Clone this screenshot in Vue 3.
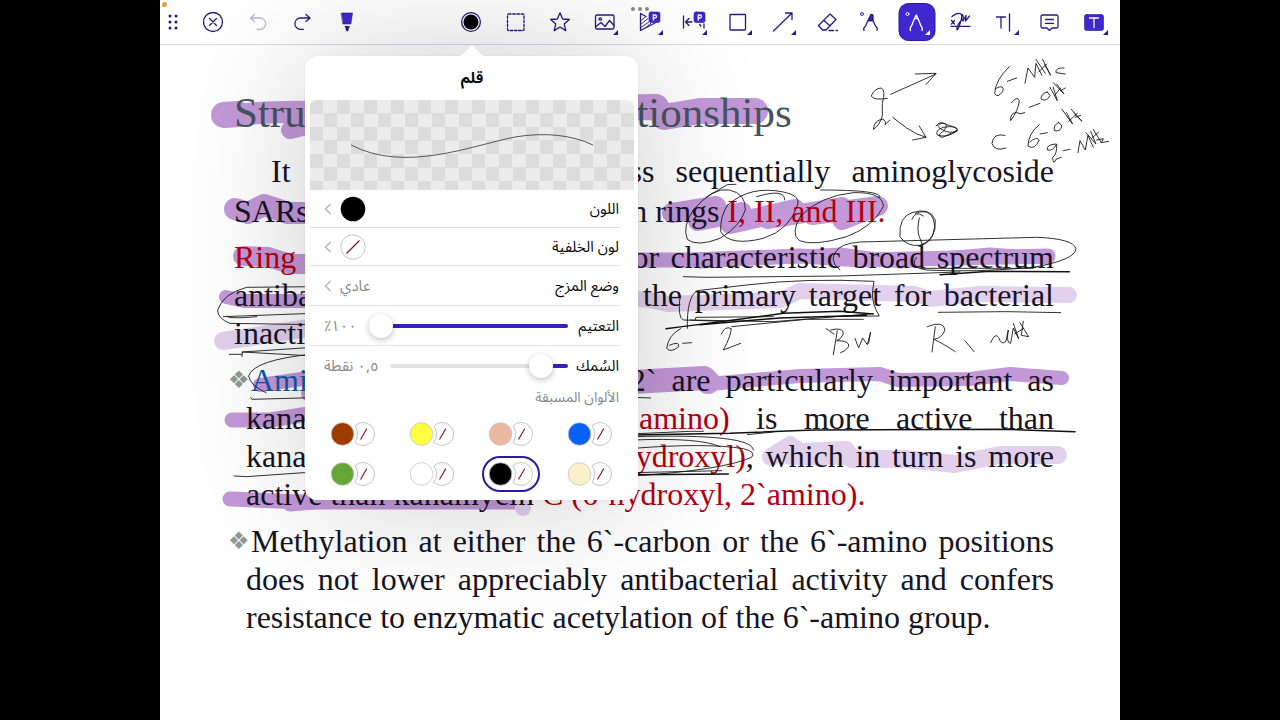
<script setup>
import { ref } from 'vue'

const opacity = ref(100)
const thickness = ref(10)

const swatches = [
  { name: 'بني', color: '#a03a03' },
  { name: 'أصفر', color: '#feff41' },
  { name: 'خوخي', color: '#e9b9a0' },
  { name: 'أزرق', color: '#0a60ff' },
  { name: 'أخضر', color: '#66a636' },
  { name: 'أبيض', color: '#ffffff' },
  { name: 'أسود', color: '#000000', selected: true },
  { name: 'كريمي', color: '#faf1cb' },
]

const tools = [
  { id: 'color', label: 'Colour' },
  { id: 'select', label: 'Select' },
  { id: 'star', label: 'Favourites' },
  { id: 'image', label: 'Image', more: true },
  { id: 'area', label: 'Area measurement', more: true },
  { id: 'distance', label: 'Distance measurement', more: true },
  { id: 'square', label: 'Rectangle', more: true },
  { id: 'arrow', label: 'Arrow', more: true },
  { id: 'eraser', label: 'Eraser' },
  { id: 'marker', label: 'Highlighter' },
  { id: 'pen', label: 'Pen', more: true, active: true },
  { id: 'sign', label: 'Signature' },
  { id: 'text', label: 'Text', more: true },
  { id: 'note', label: 'Note' },
  { id: 'markup', label: 'Text markup', more: true },
]

const strong = '#c398d8'
const light = '#e2d0ec'
const highlights = [
  { c: strong, w: 26, d: 'M224 115 L238 114' },
  { c: strong, w: 22, d: 'M238 115 Q270 111 315 112' },
  { c: strong, w: 18, d: 'M290 130 L315 124' },
  { c: strong, w: 26, d: 'M600 108 L656 107' },
  { c: strong, w: 26, d: 'M664 117 L700 111 L755 111' },
  { c: strong, w: 22, d: 'M235 209 L248 213 L264 205 L288 213 L315 213' },
  { c: strong, w: 20, d: 'M672 213 L716 206 L698 221 L742 212 L730 224 L795 209 L768 219 L842 207 L812 215 L878 206 L842 220' },
  { c: strong, w: 20, d: 'M243 256 L268 257 L290 264 L310 264' },
  { c: strong, w: 15, d: 'M600 260 L690 260 L800 256 L860 260 L1048 256' },
  { c: strong, w: 13, d: 'M700 262 L840 254 L900 262 L990 254 L1048 258' },
  { c: strong, w: 14, d: 'M226 297 L244 301 L315 301' },
  { c: light, w: 16, d: 'M600 296 L650 300 L668 304 L780 300 L800 291 L915 294 L930 299 L980 294 L1069 295' },
  { c: light, w: 18, d: 'M223 341 L250 337 L315 327' },
  { c: strong, w: 14, d: 'M260 385 L315 377' },
  { c: strong, w: 14, d: 'M308 394 L318 394' },
  { c: strong, w: 24, d: 'M600 384 L650 381 L704 378 L708 382' },
  { c: strong, w: 14, d: 'M708 384 L800 376 L880 374 L898 380 L970 379 L1010 374 L1062 378' },
  { c: strong, w: 15, d: 'M232 420 L270 420 L315 413' },
  { c: light, w: 18, d: 'M771 457 L790 445 L800 452 L846 450 L852 459 L905 459 L955 464 L1000 455 L1058 455' },
  { c: light, w: 16, d: 'M790 457 L850 457' },
  { c: strong, w: 15, d: 'M230 499 L300 502 L520 502' },
  { c: strong, w: 15, d: 'M290 504 L360 498' },
  { c: light, w: 16, d: 'M523 496 L523 508' },
]

// Handwriting, grouped by the area of the page it was written on.
const notes = [
  {
    at: 'translate(640 60) scale(0.3333)',
    thin: [
      'M752 103 L888 42 M826 42 L888 40 L858 74',
      'M742 115 Q700 122 694 108 Q703 85 724 84 Q738 92 727 130 L727 168 Q718 198 700 208 Q703 180 728 178 Q740 182 735 194 L750 180',
      'M758 172 L800 204 Q830 225 858 232 M838 198 L858 232 L818 240',
      'M888 198 Q900 180 920 194 Q960 205 950 214 Q920 235 892 225 Q885 210 910 202 Q955 195 952 212 Q930 225 900 205 Q885 195 905 190 Q930 188 912 212 Q885 230 908 232 L950 212',
      'M1108 20 Q1066 60 1064 100 Q1072 116 1088 95 Q1096 70 1066 86 M1102 64 L1130 54',
      'M1155 70 L1164 24 L1184 52 L1188 10 L1206 46 M1188 -2 L1216 40 M1196 36 L1220 12 M1208 -2 L1232 46 L1214 14 M1272 24 Q1246 22 1248 38 L1276 42',
      'M1115 128 Q1132 106 1138 122 Q1136 150 1112 182 Q1110 158 1130 158 Q1142 165 1154 158 M1168 142 L1200 130',
      'M1222 96 Q1200 102 1204 118 Q1222 126 1230 106 L1222 96 M1230 82 L1252 122 L1240 82 M1244 106 L1262 84 M1240 68 L1272 102 L1250 72 M1262 92 L1276 84',
      'M1095 226 Q1060 218 1056 250 Q1064 276 1098 264',
      'M1198 194 Q1165 220 1164 258 Q1184 272 1198 240 Q1190 228 1170 246 M1200 222 L1222 218',
      'M1256 188 Q1238 196 1244 212 Q1262 216 1266 198 L1256 186 M1266 148 L1298 192 L1280 158 M1286 184 L1312 160 M1294 148 L1326 184 L1302 160 M1306 172 L1322 166',
      'M1248 252 Q1218 254 1222 270 Q1240 274 1250 252 Q1252 282 1238 292 Q1240 318 1248 298 L1264 292 M1270 272 L1290 268',
      'M1314 278 L1320 242 L1336 270 L1344 226 L1360 262 M1338 218 L1368 252 L1352 214 M1356 234 L1376 216 M1360 208 L1384 248 M1370 240 L1390 236 L1384 248 L1406 244',
      'M198 412 L262 374 L288 373',
      'M160 450 Q220 380 268 390 Q318 400 316 450 Q300 500 240 535 Q170 562 142 538 Q126 500 160 450',
      'M262 436 Q330 375 430 396 Q480 406 474 432 Q450 510 370 535 Q270 560 242 515 Q240 470 262 436',
      'M350 410 Q436 384 434 420',
      'M482 468 Q540 408 640 398 Q730 396 730 440 Q700 500 620 530 Q520 560 478 542 Q450 520 482 468 M542 390 Q730 390 720 412',
      'M816 458 Q776 470 780 530 Q800 560 840 556 Q890 540 886 480 Q870 440 816 458 M826 460 Q880 440 884 500 Q880 550 838 558',
      'M838 474 Q830 510 838 530 L848 556 M816 478 Q826 450 850 468',
    ],
    thick: [],
  },
  {
    at: 'translate(640 180) scale(0.3333)',
    thin: [
      'M600 270 Q560 238 596 205 Q620 184 700 185 L1190 172 Q1300 176 1308 206 Q1306 240 1180 262 Q1000 278 860 270 Q806 262 830 232',
      'M130 290 L200 292 L600 288 L960 276 M840 265 L1180 265',
      'M120 350 Q112 412 130 420 L250 424 M142 445 Q140 350 172 332 L330 314 Q500 294 702 304 L698 332 Q694 370 718 408 L560 410',
      'M165 420 L168 412 L400 410 M275 440 L500 418 L670 418 M150 420 L400 425 L690 402',
      'M122 446 Q85 465 80 505 Q92 520 116 500 Q120 482 88 496 M128 490 L155 488',
      'M244 462 Q255 436 274 446 Q272 470 250 510 L302 490',
      'M558 446 L582 462 M592 452 L580 524 M572 450 Q612 440 610 462 Q602 480 590 482 Q630 482 626 500 Q618 514 602 518',
      'M645 475 L656 504 L668 474 L682 494 L692 456 L686 490',
      'M886 440 L876 516 M862 440 Q912 420 915 450 Q906 475 882 478 Q908 490 946 515 M975 482 L1002 515',
      'M1052 488 Q1066 456 1076 472 Q1084 498 1098 484 L1105 450 Q1098 490 1112 490 L1120 444 L1136 476 L1120 430 M1124 462 L1150 446 M1140 428 L1166 470 L1144 466 L1150 424',
      'M895 397 L1100 395 L1262 398',
    ],
    thick: [
      'M900 284 L1050 274 L1288 275',
      'M78 446 Q300 418 430 400 L600 394 L700 402',
      'M180 434 L420 414 L680 406',
    ],
  },
  {
    at: 'translate(640 340) scale(0.3333)',
    thin: [
      'M-50 283 L150 274 L190 274 M322 284 L400 276',
      'M-20 325 Q200 308 310 326 Q350 336 335 352 Q250 390 -20 408',
      'M-20 300 Q180 292 240 320 M-20 290 Q340 280 340 330 M-20 172 L32 174 M-20 398 L245 392',
    ],
    thick: ['M-20 285 L270 280 L520 270 L1100 268 L1305 275', 'M-20 404 L265 402'],
  },
  {
    at: 'translate(160 350) scale(0.3333)',
    thin: [
      'M208 13 L245 13 M246 20 L247 6 L460 -8 M247 6 L460 18',
      'M460 12 Q280 30 266 78 Q270 106 318 128',
      'M272 142 L276 148 L460 143 M222 378 L260 380 L460 366',
      'M460 -190 L260 -188 Q190 -170 173 -120 Q172 -95 210 -80 L460 -76 M190 -100 L460 -110 M200 -102 Q200 -92 290 -100',
    ],
    thick: [],
  },
]
</script>

<template>
  <main class="stage">
    <header class="toolbar">
      <span class="rec-dot"></span>
      <span class="dots"><i></i><i></i><i></i></span>
      <div class="left-tools">
        <button class="grip" aria-label="Move toolbar">
          <svg width="10" height="16" viewBox="0 0 10 16" fill="#25157c">
            <circle cx="2" cy="2" r="1.5" /><circle cx="8" cy="2" r="1.5" />
            <circle cx="2" cy="8" r="1.5" /><circle cx="8" cy="8" r="1.5" />
            <circle cx="2" cy="14" r="1.5" /><circle cx="8" cy="14" r="1.5" />
          </svg>
        </button>
        <button class="tool" aria-label="Close">
          <svg class="icon" viewBox="0 0 24 24"><circle cx="12" cy="12" r="9.5" /><path d="M8.5 8.5 L15.5 15.5 M15.5 8.5 L8.5 15.5" /></svg>
        </button>
        <button class="tool faded" aria-label="Undo">
          <svg class="icon" viewBox="0 0 24 24"><path d="M8.5 4.5 L4.5 8 L8.5 11.5 M4.5 8 H14 a5.6 5.6 0 0 1 0 11.3 h-3" /></svg>
        </button>
        <button class="tool" aria-label="Redo">
          <svg class="icon" viewBox="0 0 24 24"><path d="M15 4.5 L19 8 L15 11.5 M19 8 H9.5 a5.6 5.6 0 0 0 0 11.3 h3" /></svg>
        </button>
        <button class="tool" aria-label="Pen style">
          <svg class="icon" viewBox="0 0 24 24"><path d="M5.5 3 h11 l-1.6 11 h-7.8 z" class="solid" /><path d="M8.6 16 h5.2 l-1.8 5.2 h-1.6 z" class="dark" /></svg>
        </button>
      </div>
      <div class="right-tools">
        <button v-for="t in tools" :key="t.id" class="tool" :class="{ active: t.active }" :aria-label="t.label">
          <svg class="icon" viewBox="0 0 24 24">
            <template v-if="t.id === 'color'">
              <circle cx="12" cy="12" r="9.4" /><circle cx="12" cy="12" r="7.5" fill="#000" stroke="none" />
            </template>
            <rect v-else-if="t.id === 'select'" x="3.5" y="4" width="16.5" height="16.5" rx="1" stroke-dasharray="2.6 1.6" />
            <path v-else-if="t.id === 'star'" d="M12 2.8 L14.6 9 L21.4 9.5 L16.2 13.9 L17.8 20.6 L12 17 L6.2 20.6 L7.8 13.9 L2.6 9.5 L9.4 9 Z" />
            <template v-else-if="t.id === 'image'">
              <rect x="2.5" y="5" width="18.5" height="14" rx="1.5" /><circle cx="7.3" cy="9" r="1.2" />
              <path d="M3 16.5 L8 12.5 L12 16.5 L16.5 10.5 L21 15.5" />
            </template>
            <template v-else-if="t.id === 'area'">
              <path d="M3.5 3.5 V20.5 L18 13 M3.5 3.5 L9 6.5" />
              <path class="fine" d="M4 10.5 L9 6.5 M4 14 L11 8.5 M4 17.5 L12.5 11.5 M9 17.5 L14.5 12.5" />
              <rect x="12" y="2" width="11" height="10.5" rx="2" class="solid" />
              <path d="M16.3 10 V5 H18 a1.5 1.5 0 0 1 0 3 H16.3" class="white" />
            </template>
            <template v-else-if="t.id === 'distance'">
              <path d="M1.5 6 V18 M10 12 H3.5 M7 8.5 L3.5 12 L7 15.5 M22 14 V18 M17.5 14.5 L19 16" />
              <rect x="12" y="2" width="11" height="10.5" rx="2" class="solid" />
              <path d="M16.3 10 V5 H18 a1.5 1.5 0 0 1 0 3 H16.3" class="white" />
            </template>
            <rect v-else-if="t.id === 'square'" x="4" y="4.5" width="15.5" height="15.5" rx="0.5" />
            <path v-else-if="t.id === 'arrow'" d="M2.5 21 L21 3 M14.5 3 H21 V9.5" />
            <path v-else-if="t.id === 'eraser'" d="M2.5 15.5 L14 4 L20 9.5 L10 20 H6.5 Z M8 10.5 L14 16 M13 20.5 H17.5 M20 20.5 H21.5" />
            <template v-else-if="t.id === 'marker'">
              <circle cx="2" cy="4" r="1.5" class="fine" /><path d="M8 10.5 L11 4.5 L12.8 5 L13 10.5 Z" class="solid" />
              <path d="M4 20.5 Q3 18 5.5 16 L8 10.5 L11 4.5 L12.8 5 L13 10.5 L15.5 16 Q18 18 17 20.5 M8 10.5 H13" />
            </template>
            <template v-else-if="t.id === 'pen'">
              <circle cx="2.5" cy="4" r="1.5" class="fine" />
              <path d="M5.5 20.5 Q4.5 18 6.5 16 L9.5 8.5 L11.3 5 L13 8.5 L16 16 Q18 18 17 20.5 M9.5 8.5 H13" />
            </template>
            <path v-else-if="t.id === 'sign'" d="M2 16.3 H21 M2.5 10.5 L5.5 14 M5.5 10.5 L2.5 14 M3 6.5 Q9 1.5 12.5 4.5 Q13.5 8 9.5 18 Q7.5 22 8 17.5 Q10 11 15 9 M12.5 4.5 Q15 4.5 14 11 L17 5.5 L16.5 11 L20.5 6" />
            <path v-else-if="t.id === 'text'" d="M2.5 7 H11.5 M7 7 V18 M15.5 4 V21" />
            <path v-else-if="t.id === 'note'" d="M4.5 5 H18.5 a1.5 1.5 0 0 1 1.5 1.5 V16.5 a1.5 1.5 0 0 1 -1.5 1.5 H14 L11.5 20.5 L9 18 H4.5 A1.5 1.5 0 0 1 3 16.5 V6.5 A1.5 1.5 0 0 1 4.5 5 Z M7.5 9.5 H15.5 M7.5 13.3 H15.5" />
            <template v-else>
              <rect x="1.5" y="4.5" width="19" height="16" rx="2" class="solid" /><path d="M6.5 8 H15.5 M11 8 V17.5" class="white" />
            </template>
          </svg>
          <span v-if="t.more" class="more"></span>
        </button>
      </div>
    </header>

    <section class="page">
      <svg class="ink" viewBox="160 45 960 675" preserveAspectRatio="xMinYMin meet" aria-hidden="true">
        <path v-for="(h, i) in highlights" :key="i" :d="h.d" :stroke="h.c" :stroke-width="h.w" />
      </svg>
      <article class="doc">
        <h1>Structure-Activity Relationships</h1>
        <p class="intro">
          <span class="line full indent">It is convenient to discuss sequentially aminoglycoside</span>
          <span class="line">SARs in terms of substituents in rings <em>I, II, and III.</em></span>
        </p>
        <p>
          <span class="line full"><em>Ring I</em> is crucially important for characteristic broad spectrum</span>
          <span class="line full">antibacterial activity, and it is the primary target for bacterial</span>
          <span class="line">inactivating enzymes.</span>
        </p>
        <p class="item">
          <span class="line full first"><span class="bullet">❖</span><b>Amino functions</b> at 6` and 2` are particularly important as</span>
          <span class="line full">kanamycin B <em>(6`amino, 2`amino)</em> is more active than</span>
          <span class="line full">kanamycin A <em>(6`–amino, 2`-hydroxyl)</em>, which in turn is more</span>
          <span class="line">active than kanamycin <em>C (6`hydroxyl, 2`amino).</em></span>
        </p>
        <p class="item">
          <span class="line full first"><span class="bullet">❖</span>Methylation at either the 6`-carbon or the 6`-amino positions</span>
          <span class="line full">does not lower appreciably antibacterial activity and confers</span>
          <span class="line">resistance to enzymatic acetylation of the 6`-amino group.</span>
        </p>
      </article>
      <svg class="ink" viewBox="160 45 960 675" preserveAspectRatio="xMinYMin meet" aria-hidden="true">
        <g v-for="(n, i) in notes" :key="i" :transform="n.at" stroke="#111">
          <path v-for="d in n.thin" :key="d" :d="d" stroke-width="2.6" />
          <path v-for="d in n.thick" :key="d" :d="d" stroke-width="4.5" />
        </g>
      </svg>
    </section>

    <aside class="popover" dir="rtl" lang="ar">
      <svg class="tip" width="30" height="12" viewBox="0 0 30 12"><path d="M0 12 Q5 11 8 7 L13 1.5 Q15 0 17 1.5 L22 7 Q25 11 30 12 Z" fill="#fff" /></svg>
      <h2>قلم</h2>
      <div class="preview">
        <svg viewBox="0 0 324 90" aria-hidden="true"><path d="M41 45 C95 73 160 46 205 37 C235 32 262 35 283 45" /></svg>
      </div>
      <button class="row short">
        <span>اللون</span>
        <span class="side">
          <svg width="26" height="26" viewBox="0 0 26 26"><circle cx="13" cy="13" r="12.3" fill="#000" /></svg>
          <svg class="chev" width="8" height="12" viewBox="0 0 8 12"><path d="M6.5 1 L1.5 6 L6.5 11" /></svg>
        </span>
      </button>
      <button class="row short">
        <span>لون الخلفية</span>
        <span class="side">
          <svg width="26" height="26" viewBox="0 0 26 26"><circle cx="13" cy="13" r="12.2" fill="#fff" stroke="#c4c4c6" /><path d="M6.5 19.5 L19.5 6.5" stroke="#8e1534" stroke-width="1.3" /></svg>
          <svg class="chev" width="8" height="12" viewBox="0 0 8 12"><path d="M6.5 1 L1.5 6 L6.5 11" /></svg>
        </span>
      </button>
      <button class="row">
        <span>وضع المزج</span>
        <span class="side">
          <span class="value">عادي</span>
          <svg class="chev" width="8" height="12" viewBox="0 0 8 12"><path d="M6.5 1 L1.5 6 L6.5 11" /></svg>
        </span>
      </button>
      <div class="row">
        <label for="opacity">التعتيم</label>
        <input id="opacity" v-model="opacity" type="range" min="0" max="100" :style="{ '--fill': opacity + '%' }" />
        <output class="value pct" dir="ltr" for="opacity">٪١٠٠</output>
      </div>
      <div class="row last">
        <label for="thickness">السُمك</label>
        <input id="thickness" v-model="thickness" type="range" min="0" max="100" :style="{ '--fill': thickness + '%' }" />
        <output class="value pts" for="thickness">٠,٥ نقطة</output>
      </div>
      <h3>الألوان المسبقة</h3>
      <div class="swatches" dir="ltr">
        <button v-for="s in swatches" :key="s.name" class="swatch" :class="{ selected: s.selected }" :aria-label="s.name">
          <svg width="46" height="26" viewBox="0 0 46 26">
            <circle cx="12.5" cy="13" r="11.3" :fill="s.color" stroke="#c4c4c6" stroke-width="0.8" />
            <path d="M25 4.8 A11.5 11.5 0 1 1 25 21.2 A15 15 0 0 0 25 4.8 Z" fill="#fff" stroke="#c4c4c6" />
            <path d="M30.5 18.5 L36.8 7.5" stroke="#8e1534" stroke-width="1.2" />
          </svg>
        </button>
      </div>
    </aside>
  </main>
</template>

<style>
body {
  background: #000;
}
</style>

<style scoped>
.stage {
  position: relative;
  display: flex;
  flex-direction: column;
  width: 75%;
  min-height: 100vh;
  margin: 0 auto;
  background: #fff;
  overflow: hidden;
  font-family: "Liberation Sans", sans-serif;
}
button {
  padding: 0;
  border: 0;
  background: none;
  font: inherit;
  color: inherit;
}
.toolbar {
  position: relative;
  display: flex;
  justify-content: space-between;
  height: 44px;
  padding-right: 3px;
  border-bottom: 1px solid #d9d8e0;
}
.rec-dot {
  position: absolute;
  top: 2px;
  left: 2px;
  width: 5px;
  height: 5px;
  border-radius: 50%;
  background: #d9a441;
}
.dots {
  position: absolute;
  top: 7px;
  left: 50%;
  display: flex;
  gap: 3px;
  transform: translateX(-50%);
}
.dots i {
  width: 4px;
  height: 4px;
  border-radius: 50%;
  background: #8b8b8d;
}
.left-tools {
  display: flex;
}
.grip {
  width: 26px;
  margin-right: 4px;
}
.left-tools .tool {
  width: 45px;
}
.right-tools {
  display: flex;
  flex: 0 1 668px;
}
.right-tools .tool {
  flex: 1;
}
.grip,
.tool {
  display: flex;
  align-items: center;
  justify-content: center;
}
.tool {
  position: relative;
}
.icon {
  width: 24px;
  height: 24px;
  fill: none;
  stroke: #2a1886;
  stroke-width: 1.3;
  stroke-linecap: round;
  stroke-linejoin: round;
}
.icon .solid {
  fill: #4127cf;
  stroke: #2a1886;
  stroke-width: 0.6;
}
.icon .dark {
  fill: #2a1886;
  stroke: none;
}
.icon .white {
  stroke: #fff;
}
.icon .fine {
  stroke-width: 0.9;
}
.faded .icon {
  stroke: #b9b3dc;
}
.more {
  position: absolute;
  right: 9px;
  bottom: 9px;
  border-bottom: 5px solid #2a1886;
  border-left: 5px solid transparent;
}
.active::before {
  content: "";
  position: absolute;
  top: 3px;
  left: 50%;
  width: 35px;
  height: 36px;
  border: 1px solid #3015a8;
  border-radius: 10px;
  background: #4127cf;
  transform: translateX(-50%);
}
.active .icon {
  position: relative;
  stroke: #fff;
}
.active .more {
  border-bottom-color: #fff;
}

.page {
  position: relative;
  flex: 1;
}
.ink {
  position: absolute;
  inset: 0;
  width: 100%;
  fill: none;
  stroke-linecap: round;
  stroke-linejoin: round;
  pointer-events: none;
}
.doc {
  position: relative;
  padding: 43px 66px 40px 74px;
  color: #161425;
  font-family: "Liberation Serif", serif;
  font-size: 32px;
  line-height: 38px;
}
h1 {
  margin: 0 0 13px;
  color: #44545e;
  font-size: 43px;
  font-weight: 400;
  line-height: 50px;
  white-space: nowrap;
}
p {
  margin: 0 0 9px;
}
.intro {
  margin-bottom: 7px;
  line-height: 40px;
}
.line {
  display: block;
  white-space: nowrap;
}
.full {
  text-align: justify;
  text-align-last: justify;
}
.indent {
  padding-left: 37px;
}
em {
  color: #b3000f;
  font-style: normal;
}
b {
  color: #0d5ba8;
  font-weight: 400;
}
.item {
  padding-left: 12px;
}
.first {
  position: relative;
  padding-left: 5px;
}
.bullet {
  position: absolute;
  left: -18px;
  color: #8f9a94;
  font-family: "DejaVu Sans", sans-serif;
  font-size: 24px;
}

.popover {
  position: absolute;
  top: 56px;
  left: 145px;
  width: 333px;
  box-sizing: border-box;
  padding: 0 4px 8px 5px;
  border-radius: 12px;
  background: #fff;
  box-shadow: 0 0 130px rgba(0, 0, 0, 0.2), 0 0 2px rgba(0, 0, 0, 0.08);
  color: #0c0c0e;
  font-family: "Noto Sans Arabic", "DejaVu Sans", sans-serif;
  font-size: 15px;
}
.tip {
  position: absolute;
  top: -11px;
  left: 50%;
  transform: translateX(-50%);
}
h2 {
  margin: 0;
  font-size: 15px;
  font-weight: 700;
  line-height: 44px;
  text-align: center;
}
.preview {
  height: 90px;
  overflow: hidden;
  border-radius: 6px 6px 0 0;
  background: repeating-conic-gradient(#ececec 0 25%, #dcdcdc 0 50%) 0 0 / 27px 27px;
}
.preview svg {
  display: block;
  width: 100%;
  height: 90px;
  fill: none;
  stroke: #555;
}
.row {
  position: relative;
  display: flex;
  align-items: center;
  justify-content: space-between;
  width: 100%;
  height: 40px;
  box-sizing: border-box;
  padding: 0 15px 0 14px;
}
.short {
  height: 38px;
}
.row::after {
  content: "";
  position: absolute;
  right: 14px;
  bottom: 0;
  left: 0;
  height: 1px;
  background: #e1e1e3;
}
.last::after {
  display: none;
}
.side {
  display: flex;
  align-items: center;
  gap: 8px;
}
.side svg {
  fill: none;
}
.chev {
  stroke: #b5b5b9;
  stroke-width: 1.4;
}
.value {
  color: #8a8a8e;
  white-space: nowrap;
}
label {
  flex: none;
  width: 41px;
}
.pct {
  width: 35px;
}
.pts {
  width: 56px;
  text-align: left;
}
input[type="range"] {
  flex: 1;
  min-width: 0;
  height: 24px;
  margin: 0 10px;
  appearance: none;
  background: none;
  direction: rtl;
}
input[type="range"]::-webkit-slider-runnable-track {
  height: 4px;
  border-radius: 2px;
  background: linear-gradient(to left, #3a20b8 var(--fill), #e3e3e5 var(--fill));
}
input[type="range"]::-webkit-slider-thumb {
  appearance: none;
  width: 24px;
  height: 24px;
  margin-top: -10px;
  border-radius: 50%;
  background: #fff;
  box-shadow: 0 2px 6px rgba(0, 0, 0, 0.25);
}
h3 {
  margin: 0;
  padding-right: 15px;
  color: #8a8a8e;
  font-size: 14px;
  font-weight: 400;
  line-height: 24px;
}
.swatches {
  display: grid;
  grid-template-columns: repeat(4, 1fr);
  justify-items: center;
  row-gap: 4px;
  padding: 6px 5px 0 3px;
}
.swatch {
  display: flex;
  align-items: center;
  justify-content: center;
  width: 58px;
  height: 36px;
  box-sizing: border-box;
  border-radius: 18px;
}
.selected {
  border: 2px solid #3018a0;
}
</style>
